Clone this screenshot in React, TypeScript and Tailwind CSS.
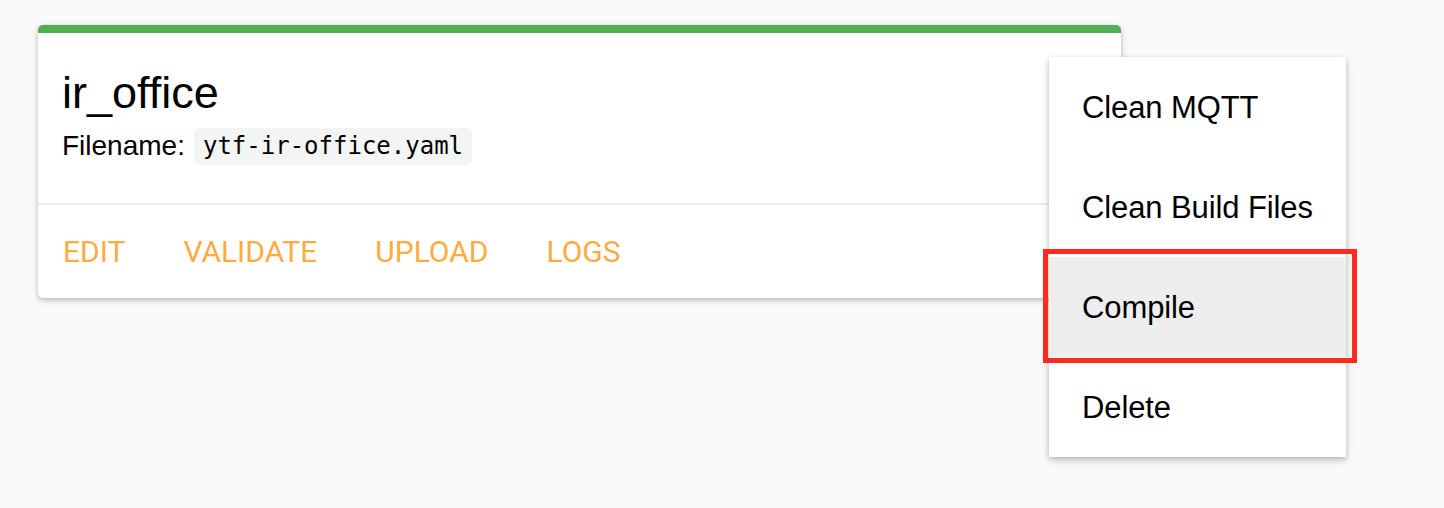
import React from "react";

const actions = ["Edit", "Validate", "Upload", "Logs"];
const menuItems = ["Clean MQTT", "Clean Build Files", "Compile", "Delete"];

const sans = "font-['Liberation_Sans',Arial,sans-serif]";

const NodeCard: React.FC<{ name: string; filename: string }> = ({
  name,
  filename,
}) => {
  return (
    <div className="w-[1083px] overflow-hidden rounded-[5px] border-t-[8px] border-[#52b054] bg-white shadow-[0_2px_4px_0_rgba(0,0,0,0.16),0_2px_8px_0_rgba(0,0,0,0.14)]">
      <div className="px-[24px] pt-[34px] pb-[36px]">
        <h1 className={`${sans} text-[45px] leading-[52px] text-black`}>
          {name}
        </h1>
        <div className="mt-[6px] flex items-center gap-[9px]">
          <span className={`${sans} text-[28px] text-black`}>Filename:</span>
          <code className="rounded-[6px] bg-[#f3f4f4] px-[9px] font-['DejaVu_Sans_Mono',monospace] text-[24px] leading-[37px] text-black">
            {filename}
          </code>
        </div>
      </div>
      <div className="flex h-[95px] items-center gap-[58px] border-t-2 border-[#ececec] px-[25px]">
        {actions.map((a) => (
          <span
            key={a}
            className="font-['Roboto',sans-serif] text-[30px] uppercase text-[#ffab40]"
          >
            {a}
          </span>
        ))}
      </div>
    </div>
  );
};

const ActionMenu: React.FC<{ items: string[]; active: string }> = ({
  items,
  active,
}) => {
  return (
    <ul className="absolute left-[1049px] top-[57px] w-[297px] bg-white shadow-[0_2px_5px_0_rgba(0,0,0,0.2),0_4px_10px_0_rgba(0,0,0,0.12)]">
      {items.map((item) => (
        <li
          key={item}
          className={`${sans} flex h-[100px] items-center whitespace-nowrap px-[33px] pt-[3px] text-[31px] tracking-[-0.1px] text-black ${
            item === active ? "bg-[#eeeeee]" : ""
          }`}
        >
          {item}
        </li>
      ))}
    </ul>
  );
};

export default function App() {
  return (
    <div className="relative h-[508px] w-full bg-[#fafafa]">
      <div className="pl-[38px] pt-[25px]">
        <NodeCard name="ir_office" filename="ytf-ir-office.yaml" />
      </div>
      <ActionMenu items={menuItems} active="Compile" />
      {/* highlight box around the selected entry */}
      <div className="absolute left-[1043px] top-[249px] h-[114px] w-[314px] border-[5px] border-[#ff2a1f]" />
    </div>
  );
}
